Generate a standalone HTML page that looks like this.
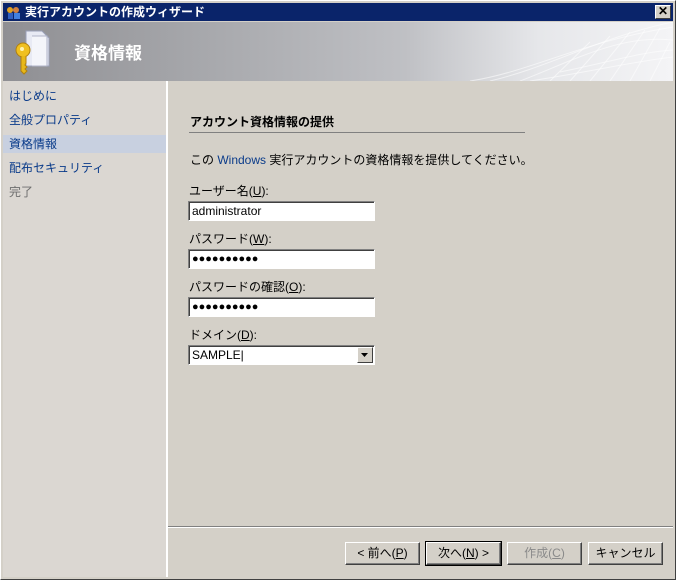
<!DOCTYPE html>
<html><head><meta charset="utf-8"><style>
*{margin:0;padding:0;box-sizing:border-box}
body{width:676px;height:580px;background:#d4d0c8;font-family:"Liberation Sans","Noto Sans CJK JP",sans-serif;font-size:12px;color:#000;position:relative;overflow:hidden}
.a{position:absolute}
.win{left:0;top:0;width:676px;height:580px;border:1px solid #fff;border-right-color:#404040;border-bottom-color:#404040}
.title{left:3px;top:3px;width:670px;height:18px;background:#0a246a;color:#fff;font-weight:bold;font-size:12px;line-height:18px;padding-left:22px}
.hdr{left:3px;top:22px;width:670px;height:59px;background:linear-gradient(90deg,#8f8f93 0%,#a7a8ac 30%,#bfc0c4 60%,#e6e7ea 80%,#f4f4f6 100%)}
.nav{left:3px;top:81px;width:163px;height:496px;background:#dbd7d2}
.nav div{position:absolute;left:6px;color:#0a3b8a;font-size:12px;height:18px;line-height:18px}
.inp{background:#fff;border:1px solid #808080;border-right-color:#fff;border-bottom-color:#fff;box-shadow:inset 1px 1px 0 #404040;height:20px;width:187px;left:188px;padding-left:3px;line-height:18px;font-size:12px}
.lbl{left:189px;font-size:12px}
u{text-decoration:underline}
.btn{top:542px;height:23px;width:75px;background:#d4d0c8;border:1px solid #fff;border-right-color:#404040;border-bottom-color:#404040;box-shadow:inset -1px -1px 0 #808080;text-align:center;line-height:21px;font-size:12px}
.dots{font-size:11px;letter-spacing:0px;line-height:18px}
</style></head><body>
<div class="a win"></div>
<div class="a title">実行アカウントの作成ウィザード</div>
<svg class="a" style="left:5px;top:5px" width="16" height="15"><circle cx="5" cy="5" r="3" fill="#e0a020"/><rect x="3" y="8" width="5" height="6" fill="#3060c0"/><circle cx="11" cy="5" r="3" fill="#d08040"/><rect x="9" y="8" width="6" height="6" fill="#4080e0"/></svg>
<div class="a" style="left:655px;top:5px;width:16px;height:14px;background:#d4d0c8;border:1px solid #fff;border-right-color:#404040;border-bottom-color:#404040;font-size:12px;font-weight:bold;line-height:11px;text-align:center">✕</div>
<div class="a hdr"></div>
<svg class="a" style="left:470px;top:22px" width="203" height="59"><g stroke="#fff" stroke-opacity=".55" fill="none" stroke-width="1"><path d="M0 59 C60 50 110 20 203 5"/><path d="M20 59 C80 45 130 15 203 0"/><path d="M50 59 C100 40 150 12 203 18"/><path d="M80 59 L120 20 M100 59 L140 14 M120 59 L160 10 M140 59 L175 8 M160 59 L190 6 M180 59 L200 20"/><path d="M60 59 C120 50 160 40 203 35"/><path d="M90 50 C140 40 170 30 203 28"/></g></svg>
<svg class="a" style="left:13px;top:28px" width="42" height="48"><path d="M13 3h16l7 7v28h-23z" fill="#e8eaf4" stroke="#9aa0b8"/><path d="M19 8h15v30h-15" fill="#f4f5fa" stroke="#b0b4c8"/><circle cx="10" cy="22" r="7" fill="#f0c020" stroke="#b08010"/><circle cx="9" cy="21" r="2" fill="#fff3b0"/><path d="M8 28v15l3 3 3-3-2-2 2-2-2-2 1-2v-7" fill="#e8b818" stroke="#b08010"/></svg>
<div class="a" style="left:74px;top:39px;color:#fff;font-size:17px;font-weight:bold">資格情報</div>
<div class="a nav">
<div style="top:6px">はじめに</div>
<div style="top:30px">全般プロパティ</div>
<div style="top:54px;left:0;width:163px;padding-left:6px;background:#c8d0e0">資格情報</div>
<div style="top:78px">配布セキュリティ</div>
<div style="top:102px;color:#6e6e6e">完了</div>
</div>
<div class="a" style="left:166px;top:81px;width:2px;height:496px;background:#fff"></div>
<div class="a" style="left:190px;top:113px;font-weight:bold">アカウント資格情報の提供</div>
<div class="a" style="left:189px;top:132px;width:336px;height:1px;background:#808080"></div>
<div class="a" style="left:190px;top:151px">この <span style="color:#0a3b8a">Windows</span> 実行アカウントの資格情報を提供してください。</div>
<div class="a lbl" style="top:182px">ユーザー名(<u>U</u>):</div>
<div class="a inp" style="top:201px">administrator</div>
<div class="a lbl" style="top:230px">パスワード(<u>W</u>):</div>
<div class="a inp dots" style="top:249px">●●●●●●●●●●</div>
<div class="a lbl" style="top:278px">パスワードの確認(<u>O</u>):</div>
<div class="a inp dots" style="top:297px">●●●●●●●●●●</div>
<div class="a lbl" style="top:326px">ドメイン(<u>D</u>):</div>
<div class="a inp" style="top:345px">SAMPLE|</div>
<div class="a" style="left:357px;top:347px;width:16px;height:16px;background:#d4d0c8;border:1px solid #fff;border-right-color:#404040;border-bottom-color:#404040"><svg width="14" height="14"><path d="M3 5h7l-3.5 4z" fill="#000"/></svg></div>
<div class="a" style="left:168px;top:526px;width:505px;height:1px;background:#808080"></div>
<div class="a" style="left:168px;top:527px;width:505px;height:1px;background:#fff"></div>
<div class="a btn" style="left:345px">&lt; 前へ(<u>P</u>)</div>
<div class="a btn" style="left:426px;outline:1px solid #000">次へ(<u>N</u>) &gt;</div>
<div class="a btn" style="left:507px;color:#8a8a8a">作成(<u>C</u>)</div>
<div class="a btn" style="left:588px">キャンセル</div>
</body></html>
